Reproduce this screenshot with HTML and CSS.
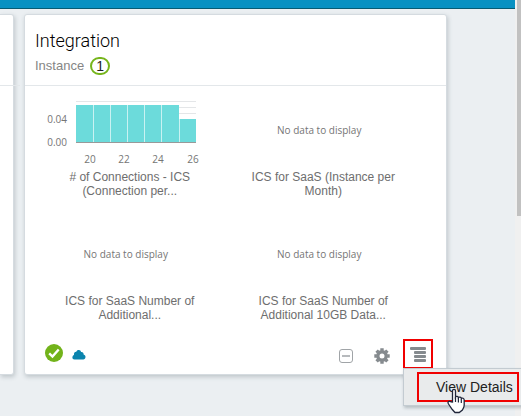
FILE: index.html
```html
<!DOCTYPE html>
<html lang="en">
<head>
<meta charset="utf-8">
<title>Integration</title>
<link rel="stylesheet" href="styles.css">
</head>
<body>
<div class="page">
  <header class="topbar"></header>
  <main class="cards">
    <section class="card card-previous"><div class="card-head"></div></section>
    <section class="card card-main">
      <div class="card-head">
        <h1 class="title">Integration</h1>
        <div class="instance"><span>Instance</span><span class="count">1</span></div>
      </div>
      <div class="metrics">
        <figure class="metric">
          <div class="plot">
            <svg class="chart" width="158" height="70" viewBox="0 0 158 70">
              <path class="grid" d="M29 6.500h120M29 12.500h120M29 18.500h120M29 24.500h120M29 30.500h120M29 36.500h120M29 42.500h120"/>
              <path class="bars" d="M29 10h17v37h-17zM47 10h16v37h-16zM64 10h16v37h-16zM81 10h16v37h-16zM98 10h16v37h-16zM115 10h17v37h-17zM133 24h16v23h-16z"/>
              <path class="gaps" d="M46.500 10v37M63.500 10v37M80.500 10v37M97.500 10v37M114.500 10v37M132.500 24v23"/>
              <path class="axis" d="M29 47.500h120"/>
              <g class="labels">
                <text x="20" y="28" text-anchor="end">0.04</text>
                <text x="20" y="51" text-anchor="end">0.00</text>
                <text x="43" y="68" text-anchor="middle">20</text>
                <text x="77" y="68" text-anchor="middle">22</text>
                <text x="111" y="68" text-anchor="middle">24</text>
                <text x="146" y="68" text-anchor="middle">26</text>
              </g>
            </svg>
          </div>
          <figcaption># of Connections - ICS<br>(Connection per...</figcaption>
        </figure>
        <figure class="metric">
          <div class="plot">No data to display</div>
          <figcaption>ICS for SaaS (Instance per<br>Month)</figcaption>
        </figure>
        <figure class="metric">
          <div class="plot">No data to display</div>
          <figcaption>ICS for SaaS Number of<br>Additional...</figcaption>
        </figure>
        <figure class="metric">
          <div class="plot">No data to display</div>
          <figcaption>ICS for SaaS Number of<br>Additional 10GB Data...</figcaption>
        </figure>
      </div>
      <footer class="card-foot">
        <div class="status">
          <svg width="18" height="18" viewBox="0 0 18 18"><circle cx="9" cy="9" r="9" fill="#72b31a"/><path d="M4.200 9.300l3.300 3.200 6.200-7" fill="none" stroke="#fff" stroke-width="2.400"/></svg>
          <svg class="cloud" width="14" height="11" viewBox="0 0 14 11"><path d="M2.500 10.500C.8 10.500.3 9.300.4 8.200.5 7 1.200 6.300 2 6 1.600 3.800 3 2.600 4.300 2.700 4.800 1.300 5.900.8 6.900 1c1.200.1 1.900.9 2.200 1.900 1.700-.2 2.600.9 2.500 2.500 1.300.4 2 1.500 1.900 2.700-.1 1.500-.9 2.400-2.200 2.400z" fill="#0b84ad"/></svg>
        </div>
        <div class="actions">
          <button class="icon-button" type="button" aria-label="Collapse">
            <svg width="16" height="16" viewBox="0 0 16 16"><rect x="1.500" y="1.500" width="13" height="13" rx="2.500" fill="none" stroke="#a0a4a7"/><path d="M4 8h8" stroke="#999da1" stroke-width="1.400"/></svg>
          </button>
          <button class="icon-button" type="button" aria-label="Settings">
            <svg width="16" height="16" viewBox="0 0 16 16"><g fill="none" stroke="#858a8e"><circle cx="8" cy="8" r="4.200" stroke-width="3.400"/><path d="M8 .3v2.500M8 13.200v2.500M.3 8h2.500M13.200 8h2.500M2.600 2.600l1.700 1.700M11.700 11.700l1.700 1.700M2.600 13.400l1.700-1.700M11.700 4.300l1.700-1.700" stroke-width="3.400"/></g></svg>
          </button>
          <div class="menu-anchor">
            <button class="icon-button menu-button" type="button" aria-label="Actions menu">
              <svg width="16" height="16" viewBox="0 0 16 16"><g fill="#858a8e"><rect width="16" height="3" rx="1"/><rect x="4" y="4" width="12" height="3" rx="1"/><rect x="4" y="8" width="12" height="3" rx="1"/><rect x="4" y="12" width="12" height="3" rx="1"/></g></svg>
            </button>
            <div class="menu">
              <button class="menu-item" type="button">View Details</button>
              <svg class="cursor" width="20" height="26" viewBox="0 0 20 26"><path d="M5.500 14V3c0-2.300 3-2.300 3 0v6c.6-1 2.700-.8 2.900.6.800-.9 2.600-.6 2.900.8 1-.7 2.900-.2 2.900 1.600v5c0 2.500-1.200 3.600-1.800 5l-3.200 2.500H8L5.300 21.500 1.500 16c-1.500-2.200 1-3.600 2.500-2.100z" fill="#fff" stroke="#20263a" stroke-width="1.300"/><path d="M8.500 9v5M11.400 10v4.500M14.300 11v4" stroke="#20263a" stroke-width="1.200"/></svg>
            </div>
          </div>
        </div>
      </footer>
    </section>
  </main>
</div>
<div class="scrollbar"><div class="thumb"></div></div>
</body>
</html>
```
FILE: styles.css
```css
* { box-sizing: border-box; }

body {
  margin: 0;
  display: flex;
  min-height: 100vh;
  background: #ebeff2;
  font-family: "Liberation Sans", Arial, sans-serif;
  overflow: hidden;
}

.page { flex: 1; }

.topbar {
  height: 9px;
  background: #0891c2;
  border-bottom: 1px solid #075b73;
}

.scrollbar {
  width: 6px;
  padding-left: 2px;
  background: #f0f0f0;
}

.thumb { height: 52vh; background: #c1c1c1; }

.cards {
  display: flex;
  gap: 10px;
  padding: 5px 68px 0 0;
}

.card {
  background: #fff;
  border: 1px solid #d5dbe0;
  border-radius: 3px;
  box-shadow: 1px 2px 4px rgba(60, 75, 85, 0.25);
}

.card-previous {
  width: 14px;
  border-left: 0;
  border-radius: 0 3px 3px 0;
}

.card-main { flex: 1; }

.card-head {
  height: 71px;
  padding: 14px 10px 0;
  border-bottom: 1px solid #e3e7ea;
}

.title {
  margin: 0;
  font-family: Roboto, sans-serif;
  font-size: 18px;
  font-weight: 300;
  line-height: 24px;
  color: #000;
}

.instance {
  display: flex;
  align-items: center;
  gap: 6px;
  margin-top: 4px;
  font-size: 13px;
  line-height: 18px;
  color: #858585;
}

.count {
  width: 20px;
  height: 18px;
  border: 2px solid #76b51b;
  border-radius: 9px;
  font-size: 14px;
  line-height: 14px;
  text-align: center;
  color: #222;
}

.metrics {
  display: grid;
  grid-template-columns: 1fr 1fr;
  padding: 10px 30px 0 4px;
}

.metric { height: 124px; margin: 0; }

.plot {
  display: flex;
  align-items: center;
  justify-content: center;
  height: 68px;
  font-family: "Open Sans", sans-serif;
  font-size: 10px;
  color: #757575;
}

.chart { display: block; flex: none; }
.grid { stroke: #e4e6e8; }
.bars { fill: #6cdbdb; }
.gaps { stroke: #c9f2f2; }
.axis { stroke: #999; }
.labels { fill: #757575; }

figcaption {
  padding: 6px 0 0 8px;
  font-size: 12px;
  line-height: 14px;
  text-align: center;
  color: #6e6e6e;
}

.card-foot {
  display: flex;
  justify-content: space-between;
  height: 35px;
  margin-top: -5px;
  padding: 0 13px 0 20px;
}

.status { display: flex; gap: 9px; padding-top: 5px; }
.cloud { margin-top: 5px; }

.actions { display: flex; gap: 20px; }

.icon-button {
  display: flex;
  align-self: flex-start;
  padding: 0;
  margin-top: 9px;
  border: 0;
  background: none;
}

.menu-anchor { position: relative; margin-left: -7px; }

.menu-button {
  margin: 0;
  padding: 6px 5px 4px;
  border: 2px solid #f00000;
}

.menu {
  position: absolute;
  top: 29px;
  left: 0;
  width: 120px;
  padding: 3px 2px 3px 13px;
  border: 1px solid #c3cbd1;
  background: #e9ebec;
  box-shadow: 1px 2px 3px rgba(60, 75, 85, 0.3);
}

.menu-item {
  display: block;
  width: 102px;
  height: 30px;
  padding: 0 0 0 17px;
  border: 2px solid #f00000;
  background: none;
  font-family: "Liberation Sans", Arial, sans-serif;
  font-size: 14px;
  text-align: left;
  white-space: nowrap;
  color: #222;
}

.cursor { position: absolute; top: 19px; left: 43px; }
```
